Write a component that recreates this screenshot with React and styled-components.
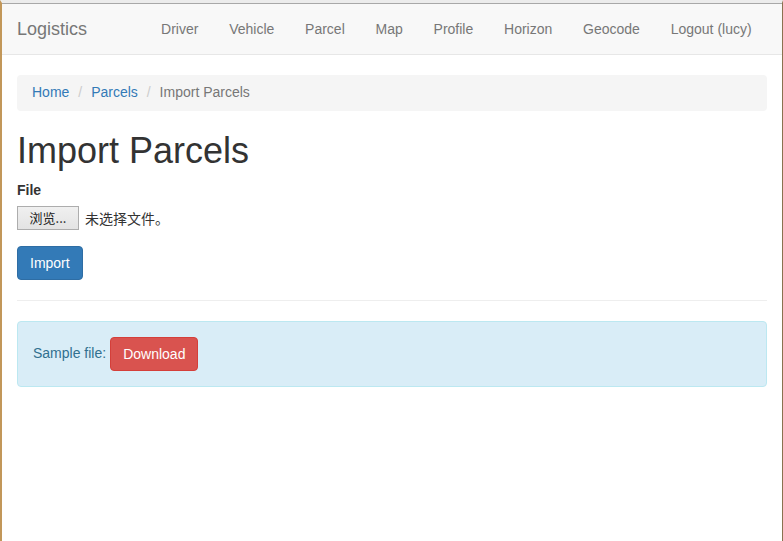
import React from 'react';
import styled, { createGlobalStyle } from 'styled-components';

const GlobalStyle = createGlobalStyle`
  html, body {
    margin: 0;
    padding: 0;
    background: #fff;
  }
  body {
    font-family: "Liberation Sans", Arial, "Noto Sans CJK SC", sans-serif;
    font-size: 14px;
    line-height: 1.42857;
    color: #333;
  }
  * {
    box-sizing: border-box;
  }
`;

// window frame around the page
const Frame = styled.div`
  min-height: 541px;
  border-top: 3px solid #ececec;
  border-left: 2px solid #c29759;
  border-right: 1px solid #8a7250;
  background: #fff;
`;

const Navbar = styled.nav`
  display: flex;
  align-items: center;
  justify-content: space-between;
  min-height: 52px;
  padding: 0 15px;
  background-color: #f8f8f8;
  border-top: 1px solid #a8a8a8;
  border-bottom: 1px solid #e7e7e7;
`;

const Brand = styled.a`
  font-size: 18px;
  line-height: 20px;
  color: #777;
  text-decoration: none;
`;

const NavItems = styled.ul`
  display: flex;
  list-style: none;
  margin: 0;
  padding: 0;
`;

const NavLink = styled.a`
  display: block;
  padding: 15px 15.4px;
  line-height: 20px;
  color: #777;
  text-decoration: none;
`;

const Container = styled.div`
  padding: 0 15px;
`;

const Breadcrumb = styled.ol`
  display: flex;
  gap: 4px;
  list-style: none;
  margin: 20px 0 20px;
  padding: 8px 15px;
  background-color: #f5f5f5;
  border-radius: 4px;

  li + li::before {
    content: '/\\00a0';
    padding: 0 5px;
    color: #ccc;
  }
`;

const Crumb = styled.li`
  color: ${p => (p.$active ? '#777' : '#337ab7')};
`;

const CrumbLink = styled.a`
  color: #337ab7;
  text-decoration: none;
`;

const Title = styled.h1`
  font-size: 36px;
  font-weight: 500;
  line-height: 1.1;
  margin: 20px 0 10px;
  color: #333;
`;

const FormGroup = styled.div`
  margin-bottom: 15px;
`;

const Label = styled.label`
  display: block;
  font-weight: bold;
  margin-bottom: 5px;
`;

const FileRow = styled.div`
  display: flex;
  align-items: center;
  height: 25px;
`;

const BrowseButton = styled.span`
  display: inline-flex;
  align-items: center;
  justify-content: center;
  width: 62px;
  height: 24px;
  border: 1px solid #adadad;
  background: linear-gradient(#f0f0f0, #e3e3e3);
  font-family: "Noto Sans CJK SC", "Liberation Sans", sans-serif;
  font-size: 13px;
  color: #222;
`;

const FileStatus = styled.span`
  margin-left: 6px;
  font-family: "Noto Sans CJK SC", sans-serif;
  font-size: 14px;
  color: #333;
`;

const Button = styled.button`
  display: inline-block;
  height: 34px;
  padding: 6px 12px;
  font-family: inherit;
  font-size: 14px;
  line-height: 20px;
  border-radius: 4px;
  border: 1px solid ${p => (p.$variant === 'danger' ? '#d43f3a' : '#2e6da4')};
  background-color: ${p => (p.$variant === 'danger' ? '#d9534f' : '#337ab7')};
  color: #fff;
  cursor: pointer;
`;

const Rule = styled.hr`
  margin: 20px 0;
  border: 0;
  border-top: 1px solid #eee;
`;

const Alert = styled.div`
  display: flex;
  align-items: center;
  gap: 4px;
  padding: 15px;
  border: 1px solid #bce8f1;
  border-radius: 4px;
  background-color: #d9edf7;
  color: #31708f;
`;

const navItems = ['Driver', 'Vehicle', 'Parcel', 'Map', 'Profile', 'Horizon', 'Geocode', 'Logout (lucy)'];

const App = () => {
  return (
    <Frame>
      <GlobalStyle />
      <Navbar>
        <Brand href="#">Logistics</Brand>
        <NavItems>
          {navItems.map(item => (
            <li key={item}>
              <NavLink href="#">{item}</NavLink>
            </li>
          ))}
        </NavItems>
      </Navbar>
      <Container>
        <Breadcrumb>
          <Crumb><CrumbLink href="#">Home</CrumbLink></Crumb>
          <Crumb><CrumbLink href="#">Parcels</CrumbLink></Crumb>
          <Crumb $active>Import Parcels</Crumb>
        </Breadcrumb>

        <Title>Import Parcels</Title>
        <form onSubmit={e => e.preventDefault()}>
          <FormGroup>
            <Label>File</Label>
            <FileRow>
              <BrowseButton>浏览...</BrowseButton>
              <FileStatus>未选择文件。</FileStatus>
            </FileRow>
          </FormGroup>
          <Button type="submit">Import</Button>
        </form>

        <Rule />

        <Alert>
          Sample file:
          <Button $variant="danger">Download</Button>
        </Alert>
      </Container>
    </Frame>
  );
};

export default App;
